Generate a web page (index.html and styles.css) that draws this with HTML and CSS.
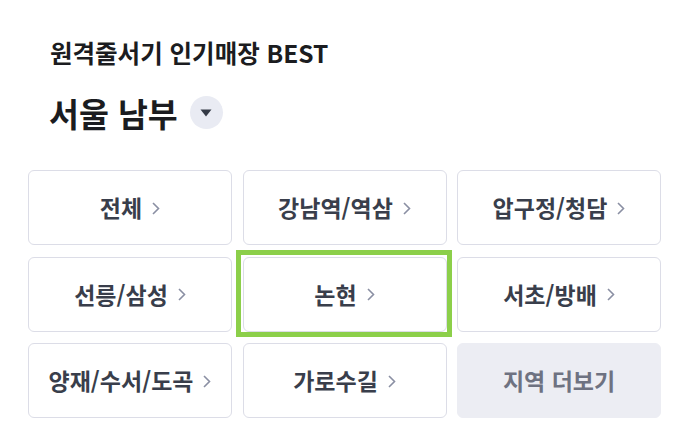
FILE: index.html
```html
<!DOCTYPE html>
<html lang="ko">
<head>
<meta charset="utf-8">
<link rel="stylesheet" href="styles.css">
</head>
<body>
<div class="page">
  <div class="subtitle">원격줄서기 인기매장 BEST</div>
  <div class="heading">
    <span class="region">서울 남부</span>
    <span class="dropdown"><svg width="12" height="8" viewBox="0 0 12 8"><path d="M0.5 0.5 H11.5 L6 7.5 Z" fill="#343a46"/></svg></span>
  </div>
  <div class="grid">
    <div class="cell"><span>전체</span><svg class="chev" width="8" height="13" viewBox="0 0 8 13"><path d="M1 1 L6.5 6.5 L1 12" fill="none" stroke="#8a8fa3" stroke-width="1.6"/></svg></div>
    <div class="cell"><span>강남역/역삼</span><svg class="chev" width="8" height="13" viewBox="0 0 8 13"><path d="M1 1 L6.5 6.5 L1 12" fill="none" stroke="#8a8fa3" stroke-width="1.6"/></svg></div>
    <div class="cell"><span>압구정/청담</span><svg class="chev" width="8" height="13" viewBox="0 0 8 13"><path d="M1 1 L6.5 6.5 L1 12" fill="none" stroke="#8a8fa3" stroke-width="1.6"/></svg></div>
    <div class="cell"><span>선릉/삼성</span><svg class="chev" width="8" height="13" viewBox="0 0 8 13"><path d="M1 1 L6.5 6.5 L1 12" fill="none" stroke="#8a8fa3" stroke-width="1.6"/></svg></div>
    <div class="cell selected"><span>논현</span><svg class="chev" width="8" height="13" viewBox="0 0 8 13"><path d="M1 1 L6.5 6.5 L1 12" fill="none" stroke="#8a8fa3" stroke-width="1.6"/></svg></div>
    <div class="cell"><span>서초/방배</span><svg class="chev" width="8" height="13" viewBox="0 0 8 13"><path d="M1 1 L6.5 6.5 L1 12" fill="none" stroke="#8a8fa3" stroke-width="1.6"/></svg></div>
    <div class="cell"><span>양재/수서/도곡</span><svg class="chev" width="8" height="13" viewBox="0 0 8 13"><path d="M1 1 L6.5 6.5 L1 12" fill="none" stroke="#8a8fa3" stroke-width="1.6"/></svg></div>
    <div class="cell"><span>가로수길</span><svg class="chev" width="8" height="13" viewBox="0 0 8 13"><path d="M1 1 L6.5 6.5 L1 12" fill="none" stroke="#8a8fa3" stroke-width="1.6"/></svg></div>
    <div class="cell more"><span>지역 더보기</span></div>
  </div>
</div>
</body>
</html>
```

FILE: styles.css
```css
html, body {
  margin: 0;
  padding: 0;
  background: #ffffff;
}
body {
  font-family: "Noto Sans CJK KR", "Noto Sans", sans-serif;
  color: #1b1c20;
}
.page {
  width: 689px;
  height: 445px;
  overflow: hidden;
  padding-top: 38px;
  box-sizing: border-box;
}
.subtitle {
  margin-left: 50px;
  font-size: 24.5px;
  line-height: 30px;
  font-weight: 700;
}
.heading {
  margin-left: 49px;
  margin-top: 24px;
  height: 41px;
  display: flex;
  align-items: center;
  gap: 12px;
}
.region {
  font-size: 32.5px;
  line-height: 41px;
  font-weight: 700;
}
.dropdown {
  width: 33px;
  height: 33px;
  border-radius: 50%;
  background: #e9ebf3;
  display: flex;
  align-items: center;
  justify-content: center;
}
.dropdown svg { display: block; margin-top: 1px; }
.grid {
  margin-top: 37px;
  margin-left: 28px;
  display: grid;
  grid-template-columns: repeat(3, 204px);
  grid-auto-rows: 75px;
  column-gap: 10.5px;
  row-gap: 11.5px;
}
.cell {
  position: relative;
  box-sizing: border-box;
  border: 1px solid #dcdde7;
  border-radius: 6px;
  background: #ffffff;
  display: flex;
  align-items: center;
  justify-content: center;
  gap: 10px;
  font-size: 23px;
  font-weight: 700;
  color: #393e4b;
}
.cell span { line-height: 1; }
.chev { display: block; margin-top: 1px; }
.cell.selected::after {
  content: "";
  position: absolute;
  left: -8px;
  top: -8px;
  right: -6px;
  bottom: -6px;
  border: 5px solid #8ccf4a;
}
.cell.more {
  border-color: #ecedf3;
  background: #ecedf3;
  color: #6e7281;
}
```
